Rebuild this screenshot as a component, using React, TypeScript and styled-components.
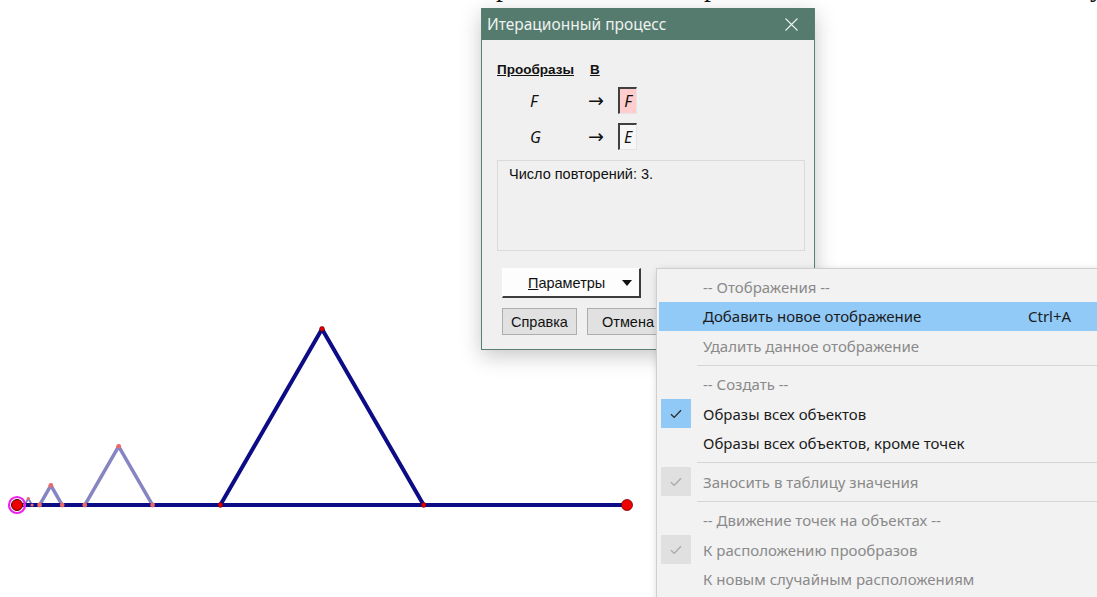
import React from 'react';
import styled, { createGlobalStyle } from 'styled-components';

const GlobalStyle = createGlobalStyle`
  html, body {
    margin: 0;
    padding: 0;
    background: #ffffff;
  }
  body {
    font-family: "Noto Sans", "Liberation Sans", sans-serif;
  }
`;

const Screen = styled.div`
  position: relative;
  width: 1097px;
  height: 597px;
  overflow: hidden;
  background: #ffffff;
`;

// clipped line of the document text running above the drawing
const TextStrip = styled.div`
  display: flex;
  height: 4px;
  overflow: hidden;
  font-family: "Liberation Serif", serif;
  font-size: 28px;
  line-height: 28px;
  color: #111;
`;

const StripGlyph = styled.span<{ $gap: number }>`
  margin-left: ${(p) => p.$gap}px;
  margin-top: -27px;
`;

const Canvas = styled.svg`
  position: absolute;
  left: 0;
  top: 0;
  width: 1097px;
  height: 597px;
`;

/* ---------- dialog ---------- */

const Window = styled.div`
  position: absolute;
  left: 481px;
  top: 8px;
  width: 334px;
  height: 342px;
  box-sizing: border-box;
  display: flex;
  flex-direction: column;
  background: #f0f0f0;
  border: 1px solid #5b7e73;
  border-top: none;
  box-shadow: 0 6px 20px rgba(0, 0, 0, 0.22);
  font-family: "Liberation Sans", Arial, sans-serif;
  font-size: 14.5px;
  color: #111;
`;

const TitleBar = styled.div`
  height: 32px;
  display: flex;
  align-items: center;
  justify-content: space-between;
  padding: 0 16px 0 5px;
  background: #557a6e;
  color: #edf2ee;
  font-family: "Noto Sans", sans-serif;
  font-size: 15.5px;
`;

const CloseGlyph = styled.svg`
  width: 13px;
  height: 13px;
`;

const Body = styled.div`
  display: flex;
  flex-direction: column;
  padding: 22px 9px 0 15px;
`;

const HeaderRow = styled.div`
  display: flex;
  gap: 16px;
  font-size: 13.5px;
  line-height: 16px;
  font-weight: bold;
  text-decoration: underline;
`;

const MapList = styled.div`
  display: flex;
  flex-direction: column;
  gap: 9px;
  margin-top: 9px;
`;

const MapRow = styled.div`
  display: flex;
  align-items: center;
  height: 27px;
`;

const Letter = styled.span`
  font-family: "Noto Sans", sans-serif;
  font-style: italic;
  font-size: 16px;
`;

const Source = styled(Letter)`
  width: 58px;
  padding-left: 33px;
`;

const Arrow = styled.span`
  width: 30px;
  font-family: "DejaVu Sans", sans-serif;
  font-size: 19px;
  line-height: 1;
`;

const TargetBox = styled.div<{ $marked?: boolean }>`
  width: 19px;
  height: 27px;
  box-sizing: border-box;
  display: flex;
  align-items: center;
  justify-content: center;
  background: ${(p) => (p.$marked ? '#ffcdcd' : '#f7f7f7')};
  border-top: 2px solid #404040;
  border-left: 2px solid #404040;
  border-right: 1px solid #e4e4e4;
  border-bottom: 1px solid #e4e4e4;
`;

const InfoBox = styled.div`
  margin-top: 10px;
  width: 308px;
  height: 91px;
  box-sizing: border-box;
  padding: 4px 11px;
  border: 1px solid #dadada;
  line-height: 18px;
`;

const ParamsButton = styled.div`
  margin: 17px 0 0 5px;
  width: 139px;
  height: 30px;
  box-sizing: border-box;
  display: flex;
  align-items: center;
  padding: 0 7px 0 25px;
  justify-content: space-between;
  background: #fdfdfd;
  border-top: 1px solid #ffffff;
  border-left: 1px solid #ffffff;
  border-right: 2px solid #3c3c3c;
  border-bottom: 2px solid #3c3c3c;
`;

const Caret = styled.span`
  width: 0;
  height: 0;
  border-left: 5px solid transparent;
  border-right: 5px solid transparent;
  border-top: 6px solid #111;
`;

const ButtonRow = styled.div`
  display: flex;
  gap: 10px;
  margin: 10px 0 0 5px;
`;

const PushButton = styled.div<{ $width: number }>`
  width: ${(p) => p.$width}px;
  height: 27px;
  box-sizing: border-box;
  display: flex;
  align-items: center;
  justify-content: center;
  background: #e1e1e1;
  border: 1px solid #adadad;
`;

/* ---------- context menu ---------- */

const Menu = styled.div`
  position: absolute;
  left: 656px;
  top: 268px;
  width: 470px;
  height: 340px;
  box-sizing: border-box;
  padding: 3px 2px;
  background: #f2f2f2;
  border: 1px solid #cfcfcf;
  box-shadow: 2px 3px 8px rgba(0, 0, 0, 0.22);
  font-family: "Noto Sans", sans-serif;
  font-size: 15px;
`;

const Item = styled.div<{ $active?: boolean; $disabled?: boolean }>`
  display: grid;
  grid-template-columns: 44px 325px auto;
  align-items: center;
  height: 29.5px;
  background: ${(p) => (p.$active ? '#91c9f7' : 'transparent')};
  color: ${(p) => (p.$disabled ? '#8a8a8a' : '#1b1b1b')};
`;

const CheckCell = styled.div<{ $disabled?: boolean }>`
  margin-left: 2px;
  width: 30px;
  height: 29px;
  display: flex;
  align-items: center;
  justify-content: center;
  background: ${(p) => (p.$disabled ? '#e0e0e0' : '#90c8f6')};
`;

const Separator = styled.div`
  height: 9px;
  display: flex;
  align-items: center;
  padding-left: 38px;
  &::after {
    content: '';
    flex: 1;
    border-top: 1px solid #d6d6d6;
  }
`;

const CheckMark = ({ disabled }: { disabled?: boolean }) => (
  <CheckCell $disabled={disabled}>
    <svg width="12" height="10" viewBox="0 0 12 10">
      <path
        d="M1 5.2 L4.2 8.4 L11 1.2"
        fill="none"
        stroke={disabled ? '#a8a8a8' : '#2b2b2b'}
        strokeWidth="1.3"
      />
    </svg>
  </CheckCell>
);

interface MenuRow {
  label: string;
  shortcut?: string;
  active?: boolean;
  disabled?: boolean;
  check?: 'on' | 'off';
}

const menuGroups: MenuRow[][] = [
  [
    { label: '-- Отображения --', disabled: true },
    { label: 'Добавить новое отображение', shortcut: 'Ctrl+A', active: true },
    { label: 'Удалить данное отображение', disabled: true },
  ],
  [
    { label: '-- Создать --', disabled: true },
    { label: 'Образы всех объектов', check: 'on' },
    { label: 'Образы всех объектов, кроме точек' },
  ],
  [{ label: 'Заносить в таблицу значения', disabled: true, check: 'off' }],
  [
    { label: '-- Движение точек на объектах --', disabled: true },
    { label: 'К расположению прообразов', disabled: true, check: 'off' },
    { label: 'К новым случайным расположениям', disabled: true },
  ],
];

/* ---------- drawing: Koch-style iterations on the left third ---------- */

const BASE_Y = 505;
const START_X = 17;
const END_X = 627;

interface Bump {
  a: number;
  b: number;
  peak: number;
}

const bumps: Bump[] = [];
{
  let right = END_X;
  for (let i = 0; i < 4; i++) {
    const third = (right - START_X) / 3;
    const a = START_X + third;
    const b = START_X + 2 * third;
    bumps.push({ a, b, peak: BASE_Y - (third * Math.sqrt(3)) / 2 });
    right = a;
  }
}

const Drawing = () => (
  <Canvas viewBox="0 0 1097 597">
    {bumps.slice(1).map((t, i) => (
      <polyline
        key={`f${i}`}
        points={`${t.a},${BASE_Y} ${(t.a + t.b) / 2},${t.peak} ${t.b},${BASE_Y}`}
        fill="none"
        stroke="#8585c4"
        strokeWidth={i > 1 ? 2 : 3.5}
        strokeLinejoin="round"
      />
    ))}
    <line x1={START_X} y1={BASE_Y} x2={END_X} y2={BASE_Y} stroke="#0c0c86" strokeWidth="4" />
    <polyline
      points={`${bumps[0].a},${BASE_Y} ${(bumps[0].a + bumps[0].b) / 2},${bumps[0].peak} ${bumps[0].b},${BASE_Y}`}
      fill="none"
      stroke="#0c0c86"
      strokeWidth="4"
      strokeLinejoin="round"
    />
    {bumps.map((t, i) =>
      [
        [t.a, BASE_Y],
        [(t.a + t.b) / 2, t.peak],
        [t.b, BASE_Y],
      ].map(([x, y], j) => (
        <circle
          key={`p${i}-${j}`}
          cx={x}
          cy={y}
          r={i > 2 ? 1.6 : 2.4}
          fill={i === 0 ? '#e00000' : '#e86a6a'}
          stroke={i === 0 ? '#600' : 'none'}
          strokeWidth="0.6"
        />
      ))
    )}
    <circle cx={END_X} cy={BASE_Y} r="5.5" fill="#ee0000" stroke="#700" strokeWidth="0.8" />
    <circle cx={START_X} cy={BASE_Y} r="8" fill="none" stroke="#ee22ee" strokeWidth="2.2" />
    <circle cx={START_X} cy={BASE_Y} r="5.5" fill="#ee0000" stroke="#500" strokeWidth="1" />
  </Canvas>
);

export default function App() {
  return (
    <Screen>
      <GlobalStyle />
      <Drawing />
      <TextStrip>
        <StripGlyph $gap={496}>р</StripGlyph>
        <StripGlyph $gap={194}>р</StripGlyph>
        <StripGlyph $gap={372}>у</StripGlyph>
      </TextStrip>

      <Window>
        <TitleBar>
          <span>Итерационный процесс</span>
          <CloseGlyph viewBox="0 0 13 13">
            <path d="M0.5 0.5 L12.5 12.5 M12.5 0.5 L0.5 12.5" stroke="#edf2ee" strokeWidth="1.1" />
          </CloseGlyph>
        </TitleBar>
        <Body>
          <HeaderRow>
            <span>Прообразы</span>
            <span>В</span>
          </HeaderRow>
          <MapList>
            <MapRow>
              <Source>F</Source>
              <Arrow>→</Arrow>
              <TargetBox $marked>
                <Letter>F</Letter>
              </TargetBox>
            </MapRow>
            <MapRow>
              <Source>G</Source>
              <Arrow>→</Arrow>
              <TargetBox>
                <Letter>E</Letter>
              </TargetBox>
            </MapRow>
          </MapList>
          <InfoBox>Число повторений: 3.</InfoBox>
          <ParamsButton>
            <span>
              <u>П</u>араметры
            </span>
            <Caret />
          </ParamsButton>
          <ButtonRow>
            <PushButton $width={75}>Справка</PushButton>
            <PushButton $width={82}>Отмена</PushButton>
          </ButtonRow>
        </Body>
      </Window>

      <Menu>
        {menuGroups.map((group, gi) => (
          <React.Fragment key={gi}>
            {gi > 0 && <Separator />}
            {group.map((row) => (
              <Item key={row.label} $active={row.active} $disabled={row.disabled}>
                {row.check ? <CheckMark disabled={row.check === 'off'} /> : <span />}
                <span>{row.label}</span>
                <span>{row.shortcut}</span>
              </Item>
            ))}
          </React.Fragment>
        ))}
      </Menu>
    </Screen>
  );
}
